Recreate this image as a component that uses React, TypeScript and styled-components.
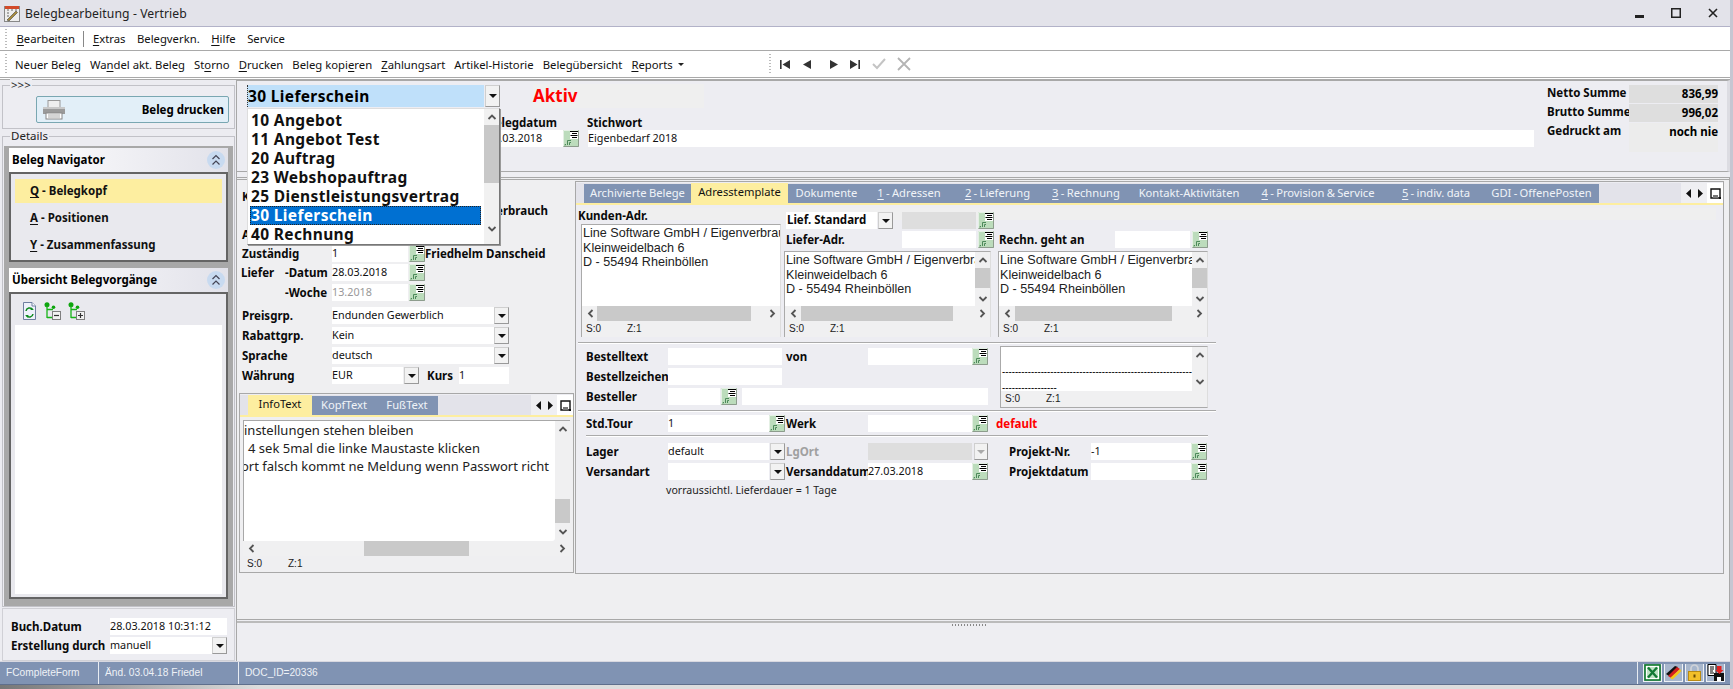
import React from "react";
import styled, { createGlobalStyle } from "styled-components";

const Global = createGlobalStyle`
  html, body { margin: 0; padding: 0; background: #e3e3ea; }
  body { font-family: "Noto Sans", "DejaVu Sans", sans-serif; font-size: 11.5px; color: #000; }
  * { box-sizing: border-box; }
  u { text-underline-offset: 2px; }
`;

const Page = styled.div`
  width: 1733px; height: 689px; overflow: hidden; display: flex; flex-direction: column;
  background: #ededf2; border-right: 3px solid #c6c6d2;
`;
const TitleBar = styled.div`
  height: 27px; flex: none; display: flex; align-items: center; padding-left: 4px;
  background: #e3e3ea; border-bottom: 1px solid #b2b2c8;
`;
const TitleText = styled.span`
  margin-left: 5px; font-size: 12.2px; color: #222; letter-spacing: 0.1px; flex: 1;
`;
const WinButtons = styled.div`
  display: flex; gap: 25px; align-items: center; padding-right: 10px;
`;
const MenuBar = styled.div`
  height: 24px; flex: none; display: flex; align-items: center; background: #fff;
  border-bottom: 1px solid #a9a9a9; padding-left: 5px; gap: 11.5px; font-size: 11.3px; color: #111;
`;
const Grip = styled.div<{ $h?: number; $mr?: number }>`
  width: 2px; height: ${p => p.$h ?? 20}px; margin-right: ${p => p.$mr ?? -2}px;
  background-image: linear-gradient(#bbb 50%, transparent 50%); background-size: 2px 3px;
`;
const MenuDivider = styled.div`
  width: 1px; height: 16px; background: #888; margin: 0 -3px;
`;
const ToolBar = styled.div`
  height: 29px; flex: none; display: flex; align-items: center; background: #fff;
  border-bottom: 3px double #a9a9a9; padding-left: 5px; gap: 9px; font-size: 11.3px; color: #111;
`;
const Caret = styled.span`
  width: 0; height: 0; border: 3px solid transparent; border-top: 3px solid #222; border-bottom: 0;
  margin-left: -4px; margin-top: 1px;
`;
const NavGroup = styled.div`
  display: flex; align-items: center; gap: 11px; margin-left: 76px;
`;
const Main = styled.div`
  flex: 1; min-height: 0; display: flex;
`;
const Left = styled.aside`
  width: 236px; flex: none; display: flex; flex-direction: column; padding: 5px 1px 0 2px;
  background: #ececf1;
`;
const Group = styled.div`
  position: relative; border: 1px solid #c2c2c8; display: flex;
`;
const Legend = styled.span`
  position: absolute; left: 7px; top: -8px; background: #ededf2; padding: 0 1px; font-size: 11.5px; line-height: 13px; color: #222;
`;
const PrintGroup = styled(Group)`
  height: 44px; padding: 10px 5px 0 33px; background: #ededf2;
`;
const PrintButton = styled.div`
  width: 193px; height: 27px; display: flex; align-items: center; justify-content: space-between;
  padding: 0 4px 0 4px; background: #e2eff8; border: 1px solid #79a7b2; border-radius: 2px;
  font-weight: 700; font-size: 11.5px;
`;
const DetailsGroup = styled(Group)`
  margin-top: 7px; height: 472px; flex-direction: column; padding: 9px 1px 0;
`;
const GrayWell = styled.div`
  flex: 1; background: #a8a8a8; padding: 2px 5px 7px; display: flex; flex-direction: column; gap: 6px;
`;
const PaneHeader = styled.div`
  height: 24px; flex: none; display: flex; align-items: center; justify-content: space-between; padding: 0 3px;
  background: linear-gradient(90deg, #fff, #e2e2ea); font-weight: 700; font-size: 11.5px;
`;
const CollapseBall = styled.span`
  width: 18px; height: 18px; border-radius: 50%; background: #c8daf0; display: flex; align-items: center; justify-content: center;
`;
const PaneBody = styled.div<{ $grow?: boolean }>`
  border: 2px solid #646464; background: #e9e9ee;
  ${p => p.$grow ? "padding: 3px 4px; flex: 1; display: flex; flex-direction: column; margin-top: -6px;" : "padding: 5px 4px 0; height: 90px;"}
`;
const NavItem = styled.div<{ $active?: boolean }>`
  height: 24px; margin-bottom: 3px; display: flex; align-items: center; padding-left: 15px; font-weight: 700; font-size: 11.5px; color: #111;
  background: ${p => p.$active ? "#fdeea0" : "transparent"};
`;
const TreeTools = styled.div`
  height: 28px; flex: none; display: flex; align-items: flex-start; gap: 7px; padding: 5px 0 0 7px;
`;
const WhiteList = styled.div`
  flex: 1; background: #fff;
`;
const BottomForm = styled.div`
  height: 53px; margin-top: 1px; padding: 9px 5px 0 8px; background: #ededf2; border: 1px solid #d0d0d6; display: flex; flex-direction: column; gap: 2px;
`;
const Row = styled.div<{ $gap?: number; $mb?: number; $mt?: number; $ml?: number }>`
  display: flex; align-items: center; height: 17px; flex: none;
  ${p => p.$gap ? `gap: ${p.$gap}px;` : ""} ${p => p.$mb !== undefined ? `margin-bottom: ${p.$mb}px;` : ""}
  ${p => p.$mt !== undefined ? `margin-top: ${p.$mt}px;` : ""} ${p => p.$ml ? `margin-left: ${p.$ml}px;` : ""}
`;
const Label = styled.span<{ $w?: number; $ml?: number; $tone?: string }>`
  ${p => p.$w ? `width: ${p.$w}px; flex: none;` : ""} ${p => p.$ml ? `margin-left: ${p.$ml}px;` : ""}
  font-weight: 700; font-size: 11.5px; white-space: nowrap; color: ${p => p.$tone ?? "#0a0a0a"};
`;
const Field = styled.div<{ $w: number; $bg?: string; $tone?: string; $ml?: number }>`
  width: ${p => p.$w}px; height: 17px; flex: none; padding-left: 0; line-height: 15px; font-size: 10.8px; white-space: nowrap; overflow: hidden;
  background: ${p => p.$bg ?? "#fff"}; color: ${p => p.$tone ?? "#111"}; ${p => p.$ml ? `margin-left: ${p.$ml}px;` : ""}
`;
const LookupBox = styled.span<{ $ml?: number }>`
  width: 16px; height: 17px; flex: none; display: block; ${p => p.$ml ? `margin-left: ${p.$ml}px;` : ""}
`;
const DropBox = styled.span<{ $ml?: number; $off?: boolean; $w?: number }>`
  width: ${p => p.$w ?? 15}px; height: 17px; flex: none; display: flex; align-items: center; justify-content: center;
  background: #f2f2f2; border: 1px solid #cfcfcf; border-right-color: #999; border-bottom-color: #999; ${p => p.$ml ? `margin-left: ${p.$ml}px;` : ""}
  &::after { content: ""; border: 4px solid transparent; border-top: 4px solid ${p => p.$off ? "#aaa" : "#111"}; border-bottom: 0; }
`;
const Right = styled.main`
  flex: 1; min-width: 0; display: flex; flex-direction: column;
`;
const TopPanel = styled.section`
  height: 92px; flex: none; display: flex; border: 1px solid #a8a8a8; border-right: 3px solid #dcdce2; background: #ededf2; padding-left: 10px; position: relative; z-index: 2;
`;
const TopMain = styled.div`
  width: 1300px; flex: none; display: flex; flex-direction: column; padding-top: 4px;
`;
const TopFirst = styled.div`
  display: flex; height: 24px; flex: none;
`;
const ComboWrap = styled.div`
  position: relative; width: 253px; height: 22px; flex: none; display: flex;
`;
const ComboValue = styled.div`
  flex: 1; background: #bfe0fa; font-weight: 700; font-size: 15.5px; line-height: 22px; padding-left: 0; letter-spacing: 0.35px;
  border-left: 1px dotted #333;
`;
const DropLarge = styled(DropBox)`
  height: 22px; margin-left: 1px;
`;
const DropList = styled.div`
  position: absolute; left: 0; top: 23px; width: 253px; height: 137px; background: #fff; display: flex;
  border: 1px solid #777; border-top: 1px solid #ddd; border-left: 1px solid #ddd; box-shadow: 1px 1px 0 #999; overflow: hidden;
`;
const DropItems = styled.div`
  flex: 1; padding: 2px 3px 0 2px;
`;
const DropItem = styled.div<{ $sel?: boolean }>`
  height: 19px; line-height: 19px; font-weight: 700; font-size: 15.5px; padding-left: 1px; white-space: nowrap; letter-spacing: 0.35px;
  color: ${p => p.$sel ? "#fff" : "#111"}; background: ${p => p.$sel ? "#0070d2" : "transparent"};
  ${p => p.$sel ? "outline: 1px dotted #222; outline-offset: -1px;" : ""}
`;
const ListScroll = styled.div`
  width: 15px; flex: none; display: flex; flex-direction: column; align-items: center; background: #f1f1f1; padding-top: 4px;
`;
const ListThumb = styled.div`
  width: 15px; height: 58px; margin: 3px 0 41px; background: #c8c8c8;
`;
const AktivBox = styled.div`
  width: 171px; height: 24px; margin-left: 33px; background: #efefef; color: #f00; font-weight: 700; font-size: 17px; line-height: 24px; margin-top: -1px;
`;
const TopSecond = styled.div`
  display: flex; margin-top: 6px; margin-left: 240px;
`;
const TopCol = styled.div<{ $w: number }>`
  width: ${p => p.$w}px; flex: none; display: flex; flex-direction: column;
`;
const TopLabel = styled(Label)`
  height: 15px; line-height: 15px; display: block;
`;
const Summary = styled.div`
  flex: none; display: flex; flex-direction: column; padding-top: 4px;
`;
const SumRow = styled.div<{ $h: number; $mb?: number }>`
  display: flex; height: ${p => p.$h}px; ${p => p.$mb ? `margin-bottom: ${p.$mb}px;` : ""}
`;
const SumValue = styled.div<{ $bg: string }>`
  width: 89px; background: ${p => p.$bg}; text-align: right; font-weight: 700; font-size: 11.5px; line-height: 17px;
`;
const Lower = styled.div`
  flex: 1; display: flex; flex-direction: column; min-height: 0; background: #eeeef2; padding-top: 5px; border-left: 1px solid #a8a8a8;
`;
const LowerFrame = styled.div`
  height: 443px; flex: none; border: 1px solid #a8a8a8; border-left: 0; border-top: 3px double #a8a8a8; background: #efeff1; display: flex; align-items: flex-start; padding: 1px 5px 0 2px; gap: 1px;
`;
const Sash = styled.div`
  height: 5px; flex: none; border-top: 2px solid #bbb; display: flex; justify-content: center; align-items: center; margin-top: 1px;
  &::after { content: ""; width: 34px; height: 2px; background-image: linear-gradient(90deg, #888 50%, transparent 50%); background-size: 3px 2px; margin-left: -30px; }
`;
const FormCol = styled.div`
  width: 335px; flex: none; display: flex; flex-direction: column; padding-top: 7px;
`;
const FormRows = styled.div`
  display: flex; flex-direction: column; gap: 2px; padding-left: 3px;
`;
const TabPane = styled.section<{ $h: number; $fill?: boolean; $mt?: number }>`
  ${p => p.$fill ? "flex: 1 1 0; min-width: 0;" : "width: 100%; flex: none;"} height: ${p => p.$h}px;
  ${p => p.$mt ? `margin-top: ${p.$mt}px;` : ""}
  border: 1px solid #a8a8a8; display: flex; flex-direction: column; background: #ededf2;
`;
const TabStrip = styled.div<{ $pl: number }>`
  height: 22px; flex: none; display: flex; align-items: flex-end; background: #e3e3ea; border-bottom: 2px solid #fdeea0; padding-left: ${p => p.$pl}px; margin-top: 1px;
`;
const Tab = styled.div<{ $active?: boolean; $w: number }>`
  width: ${p => p.$w}px; flex: none; height: ${p => p.$active ? 20 : 19}px; text-align: center; line-height: 18px; font-size: 11.2px; white-space: nowrap; word-spacing: -0.6px;
  background: ${p => p.$active ? "#fdeea0" : "#8093b3"}; color: ${p => p.$active ? "#111" : "#f0f3f8"};
`;
const TabNav = styled.div`
  margin-left: auto; display: flex; align-self: stretch; align-items: center;
`;
const TabArrows = styled.div`
  width: 26px; height: 20px; background: #efeff2; display: flex; align-items: center; justify-content: center; gap: 7px;
`;
const TabClose = styled.div`
  width: 16px; height: 20px; background: #fff; display: flex; align-items: center; justify-content: center;
`;
const EditorArea = styled.div`
  flex: 1; min-height: 0; display: flex; flex-direction: column; padding: 3px 3px 0 3px; background: #efeff1;
`;
const EditorTop = styled.div`
  display: flex; flex: 1; min-height: 0; border-top: 1px solid #a8a8a8; border-left: 1px solid #a8a8a8;
`;
const EditorText = styled.div`
  flex: 1; min-width: 0; background: #fff; overflow: hidden; font-size: 13px; line-height: 18px; white-space: nowrap; color: #222;
  border-bottom-right-radius: 3px;
`;
const EditorLine = styled.div<{ $ml?: number }>`
  margin-left: ${p => p.$ml ?? 0}px; height: 18px;
`;
const VBar = styled.div<{ $w?: number; $start: number; $len: number; $gap: number }>`
  width: ${p => p.$w ?? 15}px; flex: none; display: flex; flex-direction: column; align-items: center; padding-top: 4px; background: #f0f0f1;
  & > i { display: block; width: 100%; height: ${p => p.$len}px; background: ${p => p.$len ? "#c9c9c9" : "transparent"}; margin-top: ${p => p.$start}px; margin-bottom: ${p => p.$gap}px; }
`;
const HBar = styled.div`
  height: 15px; flex: none; display: flex; align-items: center; padding: 0 3px 0 4px; background: #f0f0f1;
`;
const HThumb = styled.i<{ $ml: number; $w: number }>`
  display: block; height: 15px; width: ${p => p.$w}px; margin-left: ${p => p.$ml}px; background: #c9c9c9; margin-right: auto;
`;
const Foot = styled.div`
  height: 16px; flex: none; display: flex; gap: 26px; padding-left: 4px; font: 10px/15px "Liberation Sans", Arial, sans-serif; color: #222;
`;
const PaneBodyForm = styled.div`
  flex: 1; display: flex; flex-direction: column; padding: 3px 7px 0 2px; min-height: 0;
`;
const AddrSection = styled.div`
  display: flex; height: 131px; flex: none;
  background: linear-gradient(#efefef, #efefef) no-repeat 0 0 / 100% 12px;
`;
const AddrLeft = styled.div`
  width: 208px; flex: none; display: flex; flex-direction: column;
`;
const AddrHeading = styled(Label)`
  line-height: 15px; height: 16px; display: block;
`;
const AddrRight = styled.div`
  flex: 1; display: flex; flex-direction: column; padding-top: 4px;
`;
const AddrBoxes = styled.div`
  display: flex; height: 86px; flex: none;
`;
const WhiteLabel = styled(Label)`
  background: #fff; height: 17px; line-height: 16px; padding-left: 1px;
`;
const AddrBox = styled.div<{ $w: number; $h: number; $ml?: number }>`
  width: ${p => p.$w}px; height: ${p => p.$h}px; flex: none; ${p => p.$ml ? `margin-left: ${p.$ml}px;` : ""}
  border: 1px solid #aaa; border-bottom: 0; border-right-color: #ddd; display: flex; flex-direction: column; background: #f0f0f1;
`;
const AddrTop = styled.div`
  flex: 1; min-height: 0; display: flex;
`;
const AddrText = styled.div`
  flex: 1; min-width: 0; background: #fff; overflow: hidden; padding: 1px 0 0 1px; font: 12.6px/14.5px "Liberation Sans", Arial, sans-serif; white-space: nowrap; color: #222;
`;
const Separator = styled.div<{ $mx?: number; $my: number; $w: number }>`
  height: 1px; flex: none; width: ${p => p.$w}px; background: #aaa; margin: ${p => p.$my}px ${p => p.$mx ?? 0}px;
  box-shadow: 0 1px 0 #fff;
`;
const OrderSection = styled.div`
  display: flex; padding-left: 8px; height: 63px; flex: none;
`;
const OrderRows = styled.div`
  width: 414px; flex: none; display: flex; flex-direction: column; gap: 3px; padding-top: 2px;
`;
const Memo = styled.div`
  width: 208px; height: 62px; display: flex; flex-direction: column; border: 1px solid #aaa; border-right-color: #ddd; background: #f0f0f1;
`;
const MemoTop = styled.div`
  flex: 1; min-height: 0; display: flex;
`;
const MemoText = styled.div`
  flex: 1; min-width: 0; background: #fff; overflow: hidden; font-size: 10px; line-height: 16px; padding-top: 16px; padding-left: 1px; white-space: nowrap;
`;
const LogisticRows = styled.div<{ $pt: number }>`
  display: flex; flex-direction: column; gap: 3px; padding: ${p => p.$pt}px 0 0 8px;
`;
const Note = styled.div`
  margin: -1px 0 0 80px; font-size: 10.6px; line-height: 16px; color: #222;
`;
const StatusBar = styled.footer`
  height: 24px; flex: none; background: #8093b3; display: flex; align-items: stretch; border-top: 1px solid #d8d8e0;
  font: 10.2px/22px "Liberation Sans", Arial, sans-serif; color: #eef1f6; border-bottom: 1px solid #5f6f8c;
`;
const StatusCell = styled.div<{ $w?: number }>`
  ${p => p.$w ? `width: ${p.$w}px;` : "flex: 1;"} flex-shrink: 0; padding-left: 6px; border-right: 1px solid #e8ecf2; white-space: nowrap;
`;
const StatusIcons = styled.div`
  flex: none; display: flex; gap: 2px; align-items: center; padding: 0 5px; width: 92px;
`;
const StatusIcon = styled.span`
  width: 19px; height: 18px; background: #a7b6cc; display: block; flex: none; border: 1px solid #eef1f5; border-width: 0 1px 1px 1px;
`;
const BottomEdge = styled.div`
  height: 4px; flex: none; background: linear-gradient(90deg, #777, #ddd 15%, #ddd);
`;

const Lookup: React.FC<{ ml?: number }> = ({ ml }) => (
  <LookupBox $ml={ml}>
    <svg width="16" height="17" viewBox="0 0 16 17">
      <rect width="16" height="17" fill="#bcdcbc" />
      <path d="M0.5 16.5V0.5H15.5" fill="none" stroke="#e4f0e4" />
      <path d="M15.5 0.5V16.5H0.5" fill="none" stroke="#8d9c8d" />
      <rect x="7" y="1" width="8" height="8" fill="#fff" />
      <path d="M7 1.5h8M9 3.5h5M7.5 5.5h7M9 7.5h5" stroke="#000" strokeWidth="1" />
      <path d="M8 10.5H4.5V15M8 12.5H6.5V15M3 14.5H2V15.5" fill="none" stroke="#4d8a5a" strokeWidth="1" />
    </svg>
  </LookupBox>
);
const Chevron: React.FC<{ dir: "u" | "d" | "l" | "r" }> = ({ dir }) => {
  const d = { u: "M1.5 6L5 2.5 8.5 6", d: "M1.5 3L5 6.5 8.5 3", l: "M6.5 1L3 4.5 6.5 8", r: "M3.5 1L7 4.5 3.5 8" }[dir];
  return (
    <svg width="10" height="9" viewBox="0 0 10 9" style={{ flex: "none" }}>
      <path d={d} fill="none" stroke="#555" strokeWidth="1.8" />
    </svg>
  );
};
const Addr: React.FC = () => (
  <AddrText>
    Line Software GmbH / Eigenverbrauch<br />Kleinweidelbach 6<br />D - 55494 Rheinböllen
  </AddrText>
);
const Tri: React.FC<{ dir: "l" | "r" }> = ({ dir }) => (
  <svg width="5" height="9" viewBox="0 0 5 9"><path d={dir === "l" ? "M5 0V9L0 4.5Z" : "M0 0V9L5 4.5Z"} fill="#111" /></svg>
);
const SaveGlyph: React.FC = () => (
  <svg width="11" height="11" viewBox="0 0 11 11"><path d="M1 1H10V10H1Z" fill="none" stroke="#111" strokeWidth="1.4" /><path d="M3 7H8V10H3Z" fill="#777" /><path d="M9 9h2v2H9z" fill="#111" /></svg>
);
const TabNavigator: React.FC = () => (
  <TabNav><TabArrows><Tri dir="l" /><Tri dir="r" /></TabArrows><TabClose><SaveGlyph /></TabClose></TabNav>
);
const Collapse: React.FC = () => (
  <CollapseBall>
    <svg width="10" height="12" viewBox="0 0 10 12"><path d="M1.5 5L5 1.5 8.5 5M1.5 10.5L5 7 8.5 10.5" fill="none" stroke="#445" strokeWidth="1.2" /></svg>
  </CollapseBall>
);
const TreeIcon: React.FC<{ plus?: boolean }> = ({ plus }) => (
  <svg width="17" height="18" viewBox="0 0 17 18">
    <circle cx="3" cy="2.7" r="2.5" fill="#0fa50f" />
    <circle cx="9.5" cy="5.2" r="1.8" fill="#0fa50f" />
    <path d="M3 4V16M3 7.5H9M3 15.5H8" stroke="#18b418" strokeWidth="1.3" fill="none" />
    <rect x="8.5" y="9.5" width="8" height="8" fill="#f2f2f2" stroke="#7f7f7f" />
    <path d={plus ? "M10 13.5H15M12.5 11V16" : "M10 13.5H15"} stroke="#333" strokeWidth="1.2" />
  </svg>
);

export default function App() {
  return (
    <Page>
      <Global />
      <TitleBar>
        <svg width="16" height="17" viewBox="0 0 16 17">
          <rect x="0.5" y="1.5" width="15" height="15" fill="#eee" stroke="#888" />
          <rect x="1" y="1" width="14" height="3" fill="#d24a2a" />
          <path d="M3 5h2M7 5h2M11 5h2M3 8h2M3 11h2" stroke="#666" />
          <path d="M3 15L12 6l1.5 1.5L5 16Z" fill="#a88c3c" stroke="#444" strokeWidth="0.6" />
        </svg>
        <TitleText>Belegbearbeitung - Vertrieb</TitleText>
        <WinButtons>
          <svg width="9" height="12" viewBox="0 0 9 12" style={{ marginRight: 2 }}><rect x="0" y="8" width="9" height="3" fill="#222" /></svg>
          <svg width="10" height="10" viewBox="0 0 10 10"><rect x="0.75" y="0.75" width="8.5" height="8.5" fill="none" stroke="#222" strokeWidth="1.5" /></svg>
          <svg width="14" height="10" viewBox="0 0 14 10"><path d="M3 1L11 9M11 1L3 9" stroke="#222" strokeWidth="1.6" /></svg>
        </WinButtons>
      </TitleBar>
      <MenuBar>
        <Grip />
        <span><u>B</u>earbeiten</span>
        <MenuDivider />
        <span><u>E</u>xtras</span>
        <span>Belegverkn.</span>
        <span><u>H</u>ilfe</span>
        <span>Service</span>
      </MenuBar>
      <ToolBar>
        <Grip $mr={-1} />
        <span>Neuer Beleg</span>
        <span>Wa<u>n</u>del akt. Beleg</span>
        <span>St<u>o</u>rno</span>
        <span><u>D</u>rucken</span>
        <span>Beleg kopi<u>e</u>ren</span>
        <span><u>Z</u>ahlungsart</span>
        <span>Artikel-Historie</span>
        <span>Belegübersicht</span>
        <span><u>R</u>eports</span>
        <Caret />
        <NavGroup>
          <Grip $mr={-2} />
          <svg width="11" height="9" viewBox="0 0 11 9"><path d="M0 0h1.6v9H0zM10 0v9L2.5 4.5Z" fill="#333" /></svg>
          <svg width="10" height="9" viewBox="0 0 10 9"><path d="M9 0v9L1 4.5Z" fill="#333" /></svg>
          <svg width="10" height="9" viewBox="0 0 10 9" style={{ marginLeft: 6 }}><path d="M1 0v9l8-4.5Z" fill="#333" /></svg>
          <svg width="11" height="9" viewBox="0 0 11 9"><path d="M0 0v9l7.5-4.5ZM8.4 0H10v9H8.4z" fill="#333" /></svg>
          <svg width="14" height="12" viewBox="0 0 14 12"><path d="M1 6l4 4 8-9" fill="none" stroke="#c4c4c4" strokeWidth="2" /></svg>
          <svg width="14" height="14" viewBox="0 0 14 14"><path d="M1 1L13 13M13 1L1 13" stroke="#b4b4b4" strokeWidth="1.8" /></svg>
        </NavGroup>
      </ToolBar>
      <Main>
        <Left>
          <PrintGroup>
            <Legend>&gt;&gt;&gt;</Legend>
            <PrintButton>
              <svg width="24" height="20" viewBox="0 0 24 20" style={{ marginLeft: 1 }}>
                <rect x="6" y="0.5" width="12" height="7" fill="#eee" stroke="#999" />
                <rect x="1" y="7" width="22" height="7" fill="#9a9a9a" />
                <rect x="1" y="7" width="22" height="2" fill="#c8c8c8" />
                <rect x="4" y="13" width="16" height="6" fill="#fff" stroke="#888" />
                <path d="M6 15h12M6 17h12" stroke="#aaa" />
              </svg>
              Beleg drucken
            </PrintButton>
          </PrintGroup>
          <DetailsGroup>
            <Legend>Details</Legend>
            <GrayWell>
              <div>
                <PaneHeader>Beleg Navigator<Collapse /></PaneHeader>
                <PaneBody>
                  <NavItem $active><u>Q</u>&nbsp;- Belegkopf</NavItem>
                  <NavItem><u>A</u>&nbsp;- Positionen</NavItem>
                  <NavItem><u>Y</u>&nbsp;- Zusammenfassung</NavItem>
                </PaneBody>
              </div>
              <PaneHeader>Übersicht Belegvorgänge<Collapse /></PaneHeader>
              <PaneBody $grow>
                <TreeTools>
                  <svg width="15" height="18" viewBox="0 0 15 18">
                    <path d="M1.5 0.5H10L13.5 4V17.5H1.5Z" fill="#eef1fa" stroke="#6f7fa0" />
                    <path d="M10 0.5V4H13.5" fill="#fff" stroke="#6f7fa0" />
                    <path d="M4 9a3.6 3.6 0 0 1 6.5-1.5M11 12a3.6 3.6 0 0 1-6.5 1.5" fill="none" stroke="#0c8a1c" strokeWidth="1.5" />
                    <path d="M9 5.5L12 8H8.5ZM6 15.5L3 13H6.5Z" fill="#0c8a1c" />
                  </svg>
                  <TreeIcon />
                  <TreeIcon plus />
                </TreeTools>
                <WhiteList />
              </PaneBody>
            </GrayWell>
          </DetailsGroup>
          <BottomForm>
            <Row><Label $w={99}>Buch.Datum</Label><Field $w={117}>28.03.2018 10:31:12</Field></Row>
            <Row><Label $w={99}>Erstellung durch</Label><Field $w={102}>manuell</Field><DropBox /></Row>
          </BottomForm>
        </Left>
        <Right>
          <TopPanel>
            <TopMain>
              <TopFirst>
                <ComboWrap>
                  <ComboValue>30 Lieferschein</ComboValue>
                  <DropLarge />
                  <DropList>
                    <DropItems>
                      <DropItem>10 Angebot</DropItem>
                      <DropItem>11 Angebot Test</DropItem>
                      <DropItem>20 Auftrag</DropItem>
                      <DropItem>23 Webshopauftrag</DropItem>
                      <DropItem>25 Dienstleistungsvertrag</DropItem>
                      <DropItem $sel>30 Lieferschein</DropItem>
                      <DropItem>40 Rechnung</DropItem>
                    </DropItems>
                    <ListScroll>
                      <Chevron dir="u" />
                      <ListThumb />
                      <Chevron dir="d" />
                    </ListScroll>
                  </DropList>
                </ComboWrap>
                <AktivBox>Aktiv</AktivBox>
              </TopFirst>
              <TopSecond>
                <TopCol $w={100}>
                  <TopLabel>Belegdatum</TopLabel>
                  <Row><Field $w={76}>28.03.2018</Field><Lookup /></Row>
                </TopCol>
                <TopCol $w={946}>
                  <TopLabel>Stichwort</TopLabel>
                  <Row><Field $w={946} $ml={1}>Eigenbedarf 2018</Field></Row>
                </TopCol>
              </TopSecond>
            </TopMain>
            <Summary>
              <SumRow $h={18} $mb={1}><Label $w={82}>Netto Summe</Label><SumValue $bg="#dedede">836,99</SumValue></SumRow>
              <SumRow $h={18} $mb={1}><Label $w={82}>Brutto Summe</Label><SumValue $bg="#dedede">996,02</SumValue></SumRow>
              <SumRow $h={29}><Label $w={82}>Gedruckt am</Label><SumValue $bg="#ececec">noch nie</SumValue></SumRow>
            </Summary>
          </TopPanel>
          <Lower>
            <LowerFrame>
              <FormCol>
                <FormRows>
                  <Row><Label $w={90}>Kunde</Label></Row>
                  <Row $mt={-5} $mb={5}><Label $ml={216}>Eigenverbrauch</Label></Row>
                  <Row><Label $w={90}>Adresse</Label></Row>
                  <Row><Label $w={90}>Zuständig</Label><Field $w={76}>1</Field><Lookup ml={1} /><Label>Friedhelm Danscheid</Label></Row>
                  <Row $ml={-1}><Label $w={44}>Liefer</Label><Label $w={47}>-Datum</Label><Field $w={76}>28.03.2018</Field><Lookup ml={1} /></Row>
                  <Row $ml={-1} $mt={1}><Label $w={91} style={{ paddingLeft: 44 }}>-Woche</Label><Field $w={76} $tone="#999">13.2018</Field><Lookup ml={1} /></Row>
                  <Row $mt={4}><Label $w={90}>Preisgrp.</Label><Field $w={162}>Endunden Gewerblich</Field><DropBox /></Row>
                  <Row $mt={1}><Label $w={90}>Rabattgrp.</Label><Field $w={162}>Kein</Field><DropBox /></Row>
                  <Row $mt={1}><Label $w={90}>Sprache</Label><Field $w={162}>deutsch</Field><DropBox /></Row>
                  <Row $mt={1}><Label $w={90}>Währung</Label><Field $w={71}>EUR</Field><DropBox $ml={1} /><Label $ml={8} $w={32}>Kurs</Label><Field $w={50}>1</Field></Row>
                </FormRows>
                <TabPane $h={180} $mt={9}>
                  <TabStrip $pl={8}>
                    <Tab $active $w={64}>InfoText</Tab>
                    <Tab $w={64}>KopfText</Tab>
                    <Tab $w={62}>FußText</Tab>
                    <TabNavigator />
                  </TabStrip>
                  <EditorArea>
                    <EditorTop>
                      <EditorText>
                        <EditorLine>instellungen stehen bleiben</EditorLine>
                        <EditorLine $ml={4}>4 sek 5mal die linke Maustaste klicken</EditorLine>
                        <EditorLine $ml={-3}>ort falsch kommt ne Meldung wenn Passwort richt</EditorLine>
                      </EditorText>
                      <VBar $start={65} $len={24} $gap={4}>
                        <Chevron dir="u" />
                        <i />
                        <Chevron dir="d" />
                      </VBar>
                    </EditorTop>
                    <HBar>
                      <Chevron dir="l" />
                      <HThumb $ml={107} $w={105} />
                      <Chevron dir="r" />
                    </HBar>
                    <Foot>
                      <span>S:0</span><span>Z:1</span>
                    </Foot>
                  </EditorArea>
                </TabPane>
              </FormCol>
              <TabPane $h={393} $fill>
                <TabStrip $pl={8}>
                  <Tab $w={107}>Archivierte Belege</Tab>
                  <Tab $active $w={97}>Adresstemplate</Tab>
                  <Tab $w={77}>Dokumente</Tab>
                  <Tab $w={88}><u>1</u> - Adressen</Tab>
                  <Tab $w={89}><u>2</u> - Lieferung</Tab>
                  <Tab $w={88}><u>3</u> - Rechnung</Tab>
                  <Tab $w={118}>Kontakt-Aktivitäten</Tab>
                  <Tab $w={140}><u>4</u> - Provision &amp; Service</Tab>
                  <Tab $w={96}><u>5</u> - indiv. data</Tab>
                  <Tab $w={115}>GDI - OffenePosten</Tab>
                  <TabNavigator />
                </TabStrip>
                <PaneBodyForm>
                  <AddrSection>
                    <AddrLeft>
                      <AddrHeading>Kunden-Adr.</AddrHeading>
                      <AddrBox $w={200} $h={113} $ml={3}>
                        <AddrTop><Addr /></AddrTop>
                        <HBar><Chevron dir="l" /><HThumb $ml={1} $w={154} /><Chevron dir="r" /></HBar>
                        <Foot><span>S:0</span><span>Z:1</span></Foot>
                      </AddrBox>
                    </AddrLeft>
                    <AddrRight>
                      <Row $mb={2}>
                        <WhiteLabel $w={91}>Lief. Standard</WhiteLabel>
                        <DropBox $ml={1} />
                        <Field $w={74} $bg="#dedede" $ml={9} />
                        <Lookup ml={2} />
                      </Row>
                      <Row $mb={3}>
                        <Label $w={116}>Liefer-Adr.</Label>
                        <Field $w={74} />
                        <Lookup ml={2} />
                        <Label $w={116} $ml={5}>Rechn. geht an</Label>
                        <Field $w={75} />
                        <Lookup ml={2} />
                      </Row>
                      <AddrBoxes>
                        <AddrBox $w={207} $h={86} $ml={-2}>
                          <AddrTop>
                            <Addr />
                            <VBar $start={3} $len={20} $gap={6}><Chevron dir="u" /><i /><Chevron dir="d" /></VBar>
                          </AddrTop>
                          <HBar><Chevron dir="l" /><HThumb $ml={2} $w={152} /><Chevron dir="r" /></HBar>
                          <Foot><span>S:0</span><span>Z:1</span></Foot>
                        </AddrBox>
                        <AddrBox $w={210} $h={86} $ml={7}>
                          <AddrTop>
                            <Addr />
                            <VBar $start={3} $len={20} $gap={6}><Chevron dir="u" /><i /><Chevron dir="d" /></VBar>
                          </AddrTop>
                          <HBar><Chevron dir="l" /><HThumb $ml={2} $w={157} /><Chevron dir="r" /></HBar>
                          <Foot><span>S:0</span><span>Z:1</span></Foot>
                        </AddrBox>
                      </AddrBoxes>
                    </AddrRight>
                  </AddrSection>
                  <Separator $my={3} $w={638} />
                  <OrderSection>
                    <OrderRows>
                      <Row><Label $w={82}>Bestelltext</Label><Field $w={114} /><Label $w={82} $ml={4}>von</Label><Field $w={104} /><Lookup /></Row>
                      <Row><Label $w={82}>Bestellzeichen</Label><Field $w={114} /></Row>
                      <Row><Label $w={82}>Besteller</Label><Field $w={52} /><Lookup ml={1} /><Field $w={246} $ml={5} /></Row>
                    </OrderRows>
                    <Memo>
                      <MemoTop>
                        <MemoText>-----------------------------------------------------------<br />-----------------</MemoText>
                        <VBar $start={0} $len={0} $gap={17}><Chevron dir="u" /><i /><Chevron dir="d" /></VBar>
                      </MemoTop>
                      <Foot><span>S:0</span><span>Z:1</span></Foot>
                    </Memo>
                  </OrderSection>
                  <Separator $my={1} $w={638} />
                  <LogisticRows $pt={3}>
                    <Row><Label $w={82}>Std.Tour</Label><Field $w={101}>1</Field><Lookup /><Label $w={82} $ml={1}>Werk</Label><Field $w={104} /><Lookup /><Label $ml={8} $tone="#f00">default</Label></Row>
                  </LogisticRows>
                  <Separator $my={3} $mx={8} $w={622} />
                  <LogisticRows $pt={4}>
                    <Row><Label $w={82}>Lager</Label><Field $w={101}>default</Field><DropBox $ml={1} /><Label $w={82} $ml={1} $tone="#a0a0a0">LgOrt</Label><Field $w={104} $bg="#dedede" /><DropBox $off $ml={2} $w={14} /><Label $w={82} $ml={21}>Projekt-Nr.</Label><Field $w={100}>-1</Field><Lookup /></Row>
                    <Row><Label $w={82}>Versandart</Label><Field $w={101} /><DropBox $ml={1} /><Label $w={82} $ml={1}>Versanddatum</Label><Field $w={104}>27.03.2018</Field><Lookup /><Label $w={82} $ml={21}>Projektdatum</Label><Field $w={100} /><Lookup /></Row>
                    <Note>vorraussichtl. Lieferdauer = 1 Tage</Note>
                  </LogisticRows>
                </PaneBodyForm>
              </TabPane>
            </LowerFrame>
            <Sash />
          </Lower>
        </Right>
      </Main>
      <StatusBar>
        <StatusCell $w={99}>FCompleteForm</StatusCell>
        <StatusCell $w={140}>Änd. 03.04.18 Friedel</StatusCell>
        <StatusCell>DOC_ID=20336</StatusCell>
        <StatusIcons>
          <StatusIcon>
            <svg width="17" height="17" viewBox="0 0 17 17"><rect x="1" y="1" width="15" height="15" fill="#fff" stroke="#0d7a2a" strokeWidth="1.6" /><path d="M3 3H14V14H3Z" fill="#bfe3c4" /><path d="M4 3.5L13 13.5M13 3.5L4 13.5" stroke="#137a35" strokeWidth="2.4" /></svg>
          </StatusIcon>
          <StatusIcon>
            <svg width="17" height="17" viewBox="0 0 17 17"><path d="M1 10L10 2l3 1-9 9Z" fill="#111" /><path d="M3 12l9-9 3 2-9 9Z" fill="#d3201f" /><path d="M5 14l10-9 1.5 2-9 8.5Z" fill="#f5c518" /></svg>
          </StatusIcon>
          <StatusIcon>
            <svg width="17" height="17" viewBox="0 0 17 17"><path d="M5 8V4.5a3.5 3.5 0 0 1 7 0V8" fill="none" stroke="#cfd2d8" strokeWidth="1.7" /><rect x="2.5" y="7.5" width="12" height="9" fill="#f2bf2a" stroke="#b98a12" /><rect x="7.5" y="10.5" width="2" height="3" fill="#6a4c05" /></svg>
          </StatusIcon>
          <StatusIcon>
            <svg width="17" height="17" viewBox="0 0 17 17"><path d="M1 0.5H9V11.5H1Z" fill="#fff" stroke="#000" /><path d="M3 3H7M3 5H7M3 7H6M3 9H7" stroke="#000" /><rect x="7" y="9" width="10" height="8" fill="#111" /><rect x="10" y="13" width="4" height="4" fill="#fff" /><path d="M10 2H14.5V6H16.5L12.5 10 8.5 6H10Z" fill="#e02020" /></svg>
          </StatusIcon>
        </StatusIcons>
      </StatusBar>
      <BottomEdge />
    </Page>
  );
}
